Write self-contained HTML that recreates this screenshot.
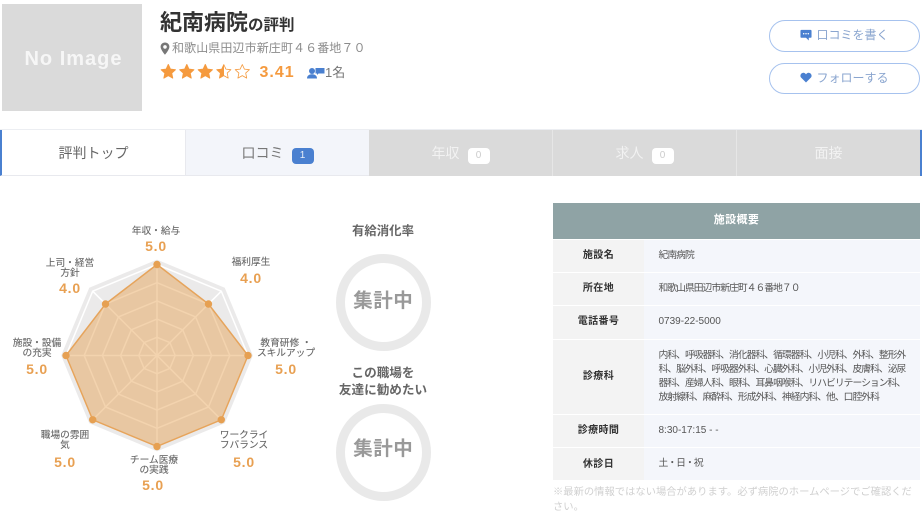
<!DOCTYPE html>
<html lang="ja">
<head>
<meta charset="utf-8">
<style>
html,body{margin:0;padding:0;background:#fff}
body{width:922px;height:520px;overflow:hidden;position:relative;font-family:"Liberation Sans","Noto Sans CJK JP",sans-serif;color:#555}
.a{position:absolute;white-space:nowrap}
.c{text-align:center}
.lab{font-size:9.7px;line-height:10px;color:#666;text-align:center;white-space:nowrap;position:absolute;-webkit-text-stroke:.1px #666}
.val{font-size:14px;font-weight:bold;color:#e8a052;letter-spacing:.8px;text-align:center;position:absolute;line-height:14px}
.tab{position:absolute;top:130px;height:46px;background:#dadada;color:#f2f2f2;font-size:14px;text-align:center;line-height:46px;box-sizing:border-box}
.bdg{display:inline-block;width:22px;height:16px;border-radius:4px;background:#fff;color:#ccc;font-size:10px;line-height:16px;text-align:center;vertical-align:0;margin-left:8px;letter-spacing:0}
.btn{position:absolute;left:769px;width:151px;box-sizing:border-box;border:1.3px solid #a6c2ee;border-radius:16px;color:#8aa5cf;font-size:12px;text-align:center;background:#fff}
.row{position:absolute;left:553px;width:367px;background:#f4f6fb}
.th{position:absolute;left:0;top:0;bottom:0;width:91px;background:#f3f3f3;color:#333;font-size:10px;font-weight:bold;text-align:center;letter-spacing:.4px}
.td{position:absolute;left:105.500px;font-size:9.800px;letter-spacing:-.98px;color:#555;white-space:nowrap}
.circ{position:absolute;left:335.500px;width:95.500px;height:97px;box-sizing:border-box;border:9px solid #e9e9e9;border-radius:50%;text-align:center;color:#999;font-size:19.500px;font-weight:bold;letter-spacing:.5px}
</style>
</head>
<body>
<!-- header -->
<div class="a c" style="left:2px;top:4px;width:140px;height:107px;background:#dadada;color:#f6f6f6;font-size:20px;font-weight:bold;line-height:111px;letter-spacing:1px;text-indent:3px">No Image</div>
<div class="a" style="left:160px;top:9px;color:#333;font-size:22px;font-weight:bold;line-height:27px">紀南病院<span style="font-size:15.500px">の評判</span></div>
<svg class="a" style="left:160px;top:42px" width="10" height="13" viewBox="0 0 10 13"><path fill-rule="evenodd" fill="#777" d="M5 0.5C2.4 0.5.6 2.4.6 4.8.6 7.8 5 12.8 5 12.8S9.4 7.800 9.400 4.800C9.400 2.400 7.600.5 5 .5ZM5 3.100A1.800 1.800 0 1 1 5 6.700 1.800 1.800 0 0 1 5 3.100Z"/></svg>
<div class="a" style="left:172px;top:40px;font-size:12px;color:#8c8c8c;line-height:17px;letter-spacing:.1px">和歌山県田辺市新庄町４６番地７０</div>
<svg class="a" style="left:160px;top:63px" width="92" height="17" viewBox="0 0 92 17">
<defs><linearGradient id="h"><stop offset="50%" stop-color="#f59a3e"/><stop offset="50%" stop-color="#fff"/></linearGradient></defs>
<g stroke="#f59a3e" stroke-linejoin="round">
<path fill="#f59a3e" d="M8.300 1.500l2.100 4.600 5 .6-3.700 3.400 1 5-4.400-2.500-4.400 2.500 1-5L1.200 6.700l5-.6z"/>
<path fill="#f59a3e" transform="translate(18.500 0)" d="M8.300 1.500l2.100 4.600 5 .6-3.700 3.400 1 5-4.400-2.500-4.400 2.500 1-5L1.200 6.700l5-.6z"/>
<path fill="#f59a3e" transform="translate(37 0)" d="M8.300 1.500l2.100 4.600 5 .6-3.700 3.400 1 5-4.400-2.500-4.400 2.500 1-5L1.200 6.700l5-.6z"/>
<path fill="url(#h)" stroke-width=".8" transform="translate(55.500 0)" d="M8.300 1.500l2.100 4.600 5 .6-3.700 3.400 1 5-4.400-2.500-4.400 2.500 1-5L1.200 6.700l5-.6z"/>
<path fill="#fff" stroke-width=".8" transform="translate(74 0)" d="M8.300 1.500l2.100 4.600 5 .6-3.700 3.400 1 5-4.400-2.500-4.400 2.500 1-5L1.200 6.700l5-.6z"/>
</g></svg>
<div class="a" style="left:259.500px;top:64px;font-size:16px;font-weight:bold;color:#f59a3e;line-height:18px;letter-spacing:1px">3.41</div>
<svg class="a" style="left:307px;top:67px" width="18" height="12" viewBox="0 0 18 12"><circle cx="5" cy="4" r="3" fill="#4a80d0"/><path fill="#4a80d0" d="M0 11.500C0 8.500 2.500 7.300 5 7.300S10 8.500 10 11.500Z"/><path fill="#4a80d0" d="M8.500 1H17.500V6.500H11.500L10 8V6.500H8.500Z"/></svg>
<div class="a" style="left:325px;top:64px;font-size:13px;color:#777;line-height:18px">1名</div>
<!-- buttons -->
<div class="btn" style="top:20px;height:32px;line-height:29px"><svg width="12" height="12" viewBox="0 0 13 13" style="vertical-align:-2px;margin-right:4px"><path fill="#4a80d0" d="M1.500 1H11.500Q12.500 1 12.500 2V8.500Q12.500 9.500 11.500 9.500H9.500V12.500L6.500 9.500H1.500Q.5 9.500.5 8.500V2Q.5 1 1.500 1Z"/><circle cx="4" cy="5.200" r=".8" fill="#fff"/><circle cx="6.500" cy="5.200" r=".8" fill="#fff"/><circle cx="9" cy="5.200" r=".8" fill="#fff"/></svg>口コミを書く</div>
<div class="btn" style="top:63px;height:31px;line-height:28px"><svg width="12" height="11" viewBox="0 0 13 12" style="vertical-align:-1px;margin-right:4px"><path fill="#4a80d0" d="M6.500 11.500L1.200 6.200C-.3 4.500.3 1.500 3 .9 4.600.6 5.800 1.400 6.500 2.600 7.200 1.400 8.400.6 10 .9 12.700 1.500 13.300 4.500 11.800 6.200Z"/></svg>フォローする</div>
<!-- tabs -->
<div class="a" style="left:0;top:129px;width:922px;height:1px;background:#eceef2"></div>
<div class="tab" style="left:0;width:186px;background:#fff;color:#666;border-left:2.500px solid #4a80d0;border-right:1px solid #e8e9ee;border-bottom:1px solid #e8e9ee">評判トップ</div>
<div class="tab" style="left:186px;width:183px;background:#f3f5fa;color:#777;border-bottom:1px solid #e8e9ee">口コミ<span class="bdg" style="background:#4a80d0;color:#e8eef8">1</span></div>
<div class="tab" style="left:369px;width:184px;border-right:1px solid #e6e6e6">年収<span class="bdg">0</span></div>
<div class="tab" style="left:553px;width:184px;border-right:1px solid #e6e6e6">求人<span class="bdg">0</span></div>
<div class="tab" style="left:737px;width:185px;border-right:2px solid #4a80d0">面接</div>
<!-- radar -->
<svg class="a" style="left:0;top:200px" width="330" height="280" viewBox="0 200 330 280">
<polygon points="157,264.500 221.300,291.200 248,355.500 221.300,419.800 157,446.500 92.700,419.800 66,355.500 92.700,291.200" fill="#ebeaea" stroke="#ebeaea" stroke-width="9" stroke-linejoin="miter"/>
<g fill="none" stroke="#fff" stroke-width="1.500">
<polygon points="157,264.500 221.300,291.200 248,355.500 221.300,419.800 157,446.500 92.700,419.800 66,355.500 92.700,291.200"/>
<polygon points="157,282.700 208.500,304 229.800,355.500 208.500,407 157,428.300 105.500,407 84.200,355.500 105.500,304"/>
<polygon points="157,300.900 195.600,316.900 211.600,355.500 195.600,394.100 157,410.100 118.400,394.100 102.400,355.500 118.400,316.900"/>
<polygon points="157,319.100 182.700,329.800 193.400,355.500 182.700,381.200 157,391.900 131.300,381.200 120.600,355.500 131.300,329.800"/>
<polygon points="157,337.300 169.900,342.600 175.200,355.500 169.900,368.400 157,373.700 144.100,368.400 138.800,355.500 144.100,342.600"/>
<path d="M157 264.500V446.500M92.700 291.200L221.300 419.800M66 355.500H248M92.700 419.800L221.300 291.200"/>
</g>
<polygon points="157,264.500 208.500,304 248,355.500 221.300,419.800 157,446.500 92.700,419.800 66,355.500 105.500,304" fill="#e39a46" fill-opacity=".44" stroke="#e6a45c" stroke-width="1.500"/>
<g fill="#e6a052"><circle cx="157" cy="264.500" r="3.700"/><circle cx="208.500" cy="304" r="3.700"/><circle cx="248" cy="355.500" r="3.700"/><circle cx="221.300" cy="419.800" r="3.700"/><circle cx="157" cy="446.500" r="3.700"/><circle cx="92.700" cy="419.800" r="3.700"/><circle cx="66" cy="355.500" r="3.700"/><circle cx="105.500" cy="304" r="3.700"/></g>
</svg>
<div class="lab" style="left:106px;width:100px;top:227px">年収・給与</div><div class="val" style="left:106px;width:100px;top:239px">5.0</div>
<div class="lab" style="left:201px;width:100px;top:258px">福利厚生</div><div class="val" style="left:201px;width:100px;top:271px">4.0</div>
<div class="lab" style="left:20px;width:100px;top:259px">上司・経営<br>方針</div><div class="val" style="left:20px;width:100px;top:281px">4.0</div>
<div class="lab" style="left:236px;width:100px;top:339px">教育研修 ・<br>スキルアップ</div><div class="val" style="left:236px;width:100px;top:362px">5.0</div>
<div class="lab" style="left:-13px;width:100px;top:339px">施設・設備<br>の充実</div><div class="val" style="left:-13px;width:100px;top:362px">5.0</div>
<div class="lab" style="left:15px;width:100px;top:431px">職場の雰囲<br>気</div><div class="val" style="left:15px;width:100px;top:455px">5.0</div>
<div class="lab" style="left:194px;width:100px;top:431px">ワークライ<br>フバランス</div><div class="val" style="left:194px;width:100px;top:455px">5.0</div>
<div class="lab" style="left:104px;width:100px;top:456px">チーム医療<br>の実践</div><div class="val" style="left:103px;width:100px;top:478px">5.0</div>
<!-- circles -->
<div class="a c" style="left:333px;width:100px;top:224px;font-size:12.400px;font-weight:bold;color:#666;line-height:15px">有給消化率</div>
<div class="circ" style="top:254px;line-height:76px">集計中</div>
<div class="a c" style="left:333px;width:100px;top:365px;font-size:12.600px;font-weight:bold;color:#666;line-height:17px">この職場を<br>友達に勧めたい</div>
<div class="circ" style="top:404px;line-height:73px">集計中</div>
<!-- table -->
<div class="a c" style="left:553px;top:203px;width:367px;height:36px;background:#8fa3a5;color:#fff;font-size:11px;font-weight:bold;line-height:35px;letter-spacing:.4px">施設概要</div>
<div class="row" style="top:240px;height:32px"><div class="th" style="line-height:32px">施設名</div><div class="td" style="top:0;line-height:31px">紀南病院</div></div>
<div class="row" style="top:273px;height:32px"><div class="th" style="line-height:32px">所在地</div><div class="td" style="top:0;line-height:31px">和歌山県田辺市新庄町４６番地７０</div></div>
<div class="row" style="top:306px;height:33px"><div class="th" style="line-height:32px">電話番号</div><div class="td" style="top:0;line-height:31px;font-size:10px;letter-spacing:0">0739-22-5000</div></div>
<div class="row" style="top:340px;height:74px"><div class="th" style="line-height:74px">診療科</div><div class="td" style="top:8.500px;line-height:14px">内科、呼吸器科、消化器科、循環器科、小児科、外科、整形外<br>科、脳外科、呼吸器外科、心臓外科、小児外科、皮膚科、泌尿<br>器科、産婦人科、眼科、耳鼻咽喉科、リハビリテーション科、<br>放射線科、麻酔科、形成外科、神経内科、他、口腔外科</div></div>
<div class="row" style="top:415px;height:32px"><div class="th" style="line-height:32px">診療時間</div><div class="td" style="top:0;line-height:31px;font-size:10px;letter-spacing:0">8:30-17:15 - -</div></div>
<div class="row" style="top:448px;height:32px"><div class="th" style="line-height:33px">休診日</div><div class="td" style="top:0;line-height:32px">土・日・祝</div></div>
<div class="a" style="left:553px;top:486px;width:365px;white-space:normal;font-size:10.300px;line-height:14.500px;color:#d0d0d0">※最新の情報ではない場合があります。必ず病院のホームページでご確認ください。</div>
</body>
</html>
